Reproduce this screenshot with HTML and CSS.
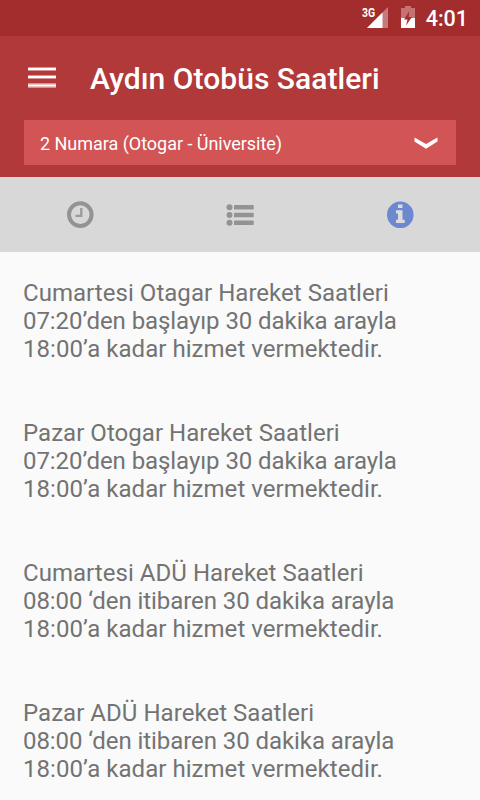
FILE: index.html
```html
<!DOCTYPE html>
<html lang="tr">
<head>
  <meta charset="UTF-8" />
  <meta name="viewport" content="width=device-width, initial-scale=1.0"/>
  <title>Aydın Otobüs Saatleri</title>
  <link rel="stylesheet" href="styles.css">
</head>
<body>
  <div class="status-bar">
    <span class="network">3G</span>
    <svg class="signal" width="21" height="21" viewBox="0 0 21 21">
      <path d="M21 0V21H0Z" fill="#c67b7b"/>
      <path d="M15.500 5.500V21H0Z" fill="#fff"/>
    </svg>
    <svg class="battery" width="14" height="22" viewBox="0 0 14 22">
      <path d="M4 0H10V2H14V12H0V2H4Z" fill="#c67272"/>
      <path d="M0 12H14V22H0Z" fill="#fff"/>
      <path d="M8.500 5L3 13.500H6.500L5 19.500L11 11H7.500Z" fill="#a32d2d"/>
    </svg>
    <span class="clock">4:01</span>
  </div>

  <header class="header">
    <div class="title-row">
      <svg class="menu-icon" width="28" height="21" viewBox="0 0 28 21">
        <path d="M0 0H28V4H0ZM0 8H28V12H0ZM0 16H28V21H0Z" fill="#d98f8f"/>
        <path d="M0 1H28V3H0ZM0 9H28V11H0ZM0 17.500H28V19.500H0Z" fill="#fff"/>
      </svg>
      <h1>Aydın Otobüs Saatleri</h1>
    </div>
    <div class="line-select">
      <span>2 Numara (Otogar - Üniversite)</span>
      <svg width="24" height="12" viewBox="0 0 24 12">
        <path d="M0.500 0.500L12 7L23.500 0.500V4.500L12 11.800L0.500 4.500Z" fill="#fff"/>
      </svg>
    </div>
  </header>

  <nav class="tabs">
    <div class="tab">
      <svg width="28" height="28" viewBox="0 0 28 28">
        <circle cx="14.300" cy="13.600" r="11.300" fill="none" stroke="#939393" stroke-width="4"/>
        <path d="M15.300 7V14.800H9.500" fill="none" stroke="#9b9b9b" stroke-width="2.300"/>
      </svg>
    </div>
    <div class="tab">
      <svg width="28" height="22" viewBox="0 0 28 22" fill="#939393">
        <circle cx="3.500" cy="3.200" r="3"/>
        <circle cx="3.500" cy="11" r="3"/>
        <circle cx="3.500" cy="18.800" r="3"/>
        <rect x="8" y="0.900" width="19.700" height="4.600" rx="0.500"/>
        <rect x="8" y="8.700" width="19.700" height="4.600" rx="0.500"/>
        <rect x="8" y="16.500" width="19.700" height="4.600" rx="0.500"/>
      </svg>
    </div>
    <div class="tab">
      <svg width="28" height="28" viewBox="0 0 28 28">
        <circle cx="14.300" cy="13.800" r="13.300" fill="#6c89cf"/>
        <path d="M12 3.500H16.500V7.100H12ZM10 9.300H16.500V18.800H18.700V22.100H10V18.800H12V12.600H10Z" fill="#dcdcdc"/>
      </svg>
    </div>
  </nav>

  <main class="info">
    <p>Cumartesi Otagar Hareket Saatleri<br><span class="interval">07:20’den başlayıp 30 dakika arayla</span><br>18:00’a kadar hizmet vermektedir.</p>
    <p>Pazar Otogar Hareket Saatleri<br><span class="interval">07:20’den başlayıp 30 dakika arayla</span><br>18:00’a kadar hizmet vermektedir.</p>
    <p>Cumartesi ADÜ Hareket Saatleri<br><span class="interval">08:00 ‘den itibaren 30 dakika arayla</span><br>18:00’a kadar hizmet vermektedir.</p>
    <p>Pazar ADÜ Hareket Saatleri<br><span class="interval">08:00 ‘den itibaren 30 dakika arayla</span><br>18:00’a kadar hizmet vermektedir.</p>
  </main>
</body>
</html>
```
FILE: styles.css
```css
* {
  box-sizing: border-box;
}

body {
  margin: 0;
  height: 800px;
  overflow: hidden;
  display: flex;
  flex-direction: column;
  font-family: Roboto, sans-serif;
  background-color: #fafafa;
}

svg {
  display: block;
  flex: none;
}

.status-bar {
  height: 36px;
  flex: none;
  display: flex;
  justify-content: flex-end;
  align-items: flex-start;
  padding: 6px 12px 0 0;
  background-color: #a32d2d;
  color: #fff;
}

.network {
  font-size: 12px;
  font-weight: 700;
  line-height: 14px;
  margin-right: -8px;
  transform: scaleX(0.87);
  transform-origin: right;
}

.signal {
  margin: 1px 13px 0 0;
}

.battery {
  margin-right: 11px;
}

.clock {
  font-size: 21.5px;
  font-weight: 500;
  line-height: 26px;
}

.header {
  height: 141px;
  flex: none;
  padding: 0 24px;
  background-color: #b23939;
  color: #fff;
}

.title-row {
  height: 84px;
  display: flex;
  align-items: center;
  padding-left: 4px;
}

.menu-icon {
  margin: 0 34px 1px 0;
}

h1 {
  margin: 2px 0 0;
  font-size: 30px;
  font-weight: 500;
  line-height: 36px;
  letter-spacing: 0.04px;
  white-space: nowrap;
}

.line-select {
  height: 45px;
  display: flex;
  align-items: center;
  justify-content: space-between;
  padding: 0 18px 0 16px;
  background-color: #d35454;
  font-size: 18px;
}

.line-select span {
  padding-top: 2px;
  letter-spacing: -0.03px;
}

.tabs {
  height: 75px;
  flex: none;
  display: flex;
  background-color: #d8d8d8;
}

.tab {
  flex: 1;
  display: flex;
  align-items: center;
  justify-content: center;
}

.info {
  padding: 27px 23px 0;
  font-size: 24px;
  line-height: 28px;
  letter-spacing: 0.04px;
  color: #737373;
  white-space: nowrap;
}

.info p {
  margin: 0 0 56px;
}

.interval {
  letter-spacing: -0.07px;
}
```
